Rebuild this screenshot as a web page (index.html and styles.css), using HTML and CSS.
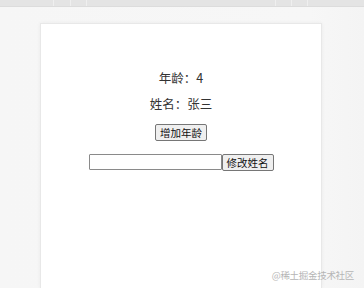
FILE: index.html
```html
<!DOCTYPE html>
<html lang="zh">
<head>
<meta charset="utf-8">
<link rel="stylesheet" href="styles.css">
</head>
<body>
<div class="topbar">
  <span class="seg s1"></span><span class="seg s2"></span><span class="seg s3"></span>
  <span class="fill"></span>
  <span class="seg s4"></span><span class="seg s5"></span><span class="seg s6"></span>
</div>
<div class="stage">
  <div class="card">
    <p class="line first">年龄：4</p>
    <p class="line second">姓名：张三</p>
    <div class="row"><button class="btn">增加年龄</button></div>
    <div class="row form"><input class="field" type="text"><button class="btn">修改姓名</button></div>
  </div>
</div>
<div class="watermark">@稀土掘金技术社区</div>
</body>
</html>
```
FILE: styles.css
```css
html, body {
  margin: 0;
  height: 100%;
}
body {
  background: linear-gradient(to right, #f6f6f6 0%, #f7f7f7 85%, #f4f4f4 100%);
  font-family: "Noto Sans CJK SC", "Noto Sans", sans-serif;
  color: #333;
  overflow: hidden;
  position: relative;
}
.topbar {
  height: 6px;
  background: #e4e4e4;
  border-bottom: 1px solid #dcdcdc;
  display: flex;
}
.seg {
  border-right: 1px solid #efefef;
}
.s1 { width: 53px; }
.s2 { width: 16px; }
.s3 { width: 15px; }
.fill { flex: 1; }
.s4 { width: 15px; border-right: none; border-left: 1px solid #efefef; }
.s5 { width: 15px; border-right: none; border-left: 1px solid #efefef; }
.s6 { width: 56px; border-right: none; border-left: 1px solid #efefef; }
.stage {
  padding: 16px 0 0 40px;
}
.card {
  width: 282px;
  height: 265px;
  background: #fff;
  border: 1px solid #e8e8e8;
  border-bottom: none;
  box-shadow: 0 0 4px rgba(0, 0, 0, 0.05);
  text-align: center;
  padding-top: 46px;
  box-sizing: border-box;
}
.line {
  margin: 0;
  font-size: 12.5px;
  line-height: 16px;
}
.second {
  margin-top: 10px;
}
.row {
  display: flex;
  justify-content: center;
  margin-top: 12px;
}
.form {
  margin-top: 13px;
}
.btn {
  font-family: "Noto Sans CJK SC", sans-serif;
  font-size: 10.5px;
  line-height: 13px;
  height: 17px;
  padding: 0 4px;
  margin: 0;
  background: #efefef;
  border: 1px solid #767676;
  border-radius: 2px;
  color: #111;
}
.field {
  width: 133px;
  height: 16px;
  box-sizing: border-box;
  margin: 0;
  padding: 0 2px;
  border: 1px solid #8a8a8a;
  border-radius: 1px;
  background: #fff;
}
.watermark {
  position: absolute;
  right: 10px;
  bottom: 6px;
  font-size: 9.5px;
  color: #b5b5b5;
  letter-spacing: -0.3px;
}
```
